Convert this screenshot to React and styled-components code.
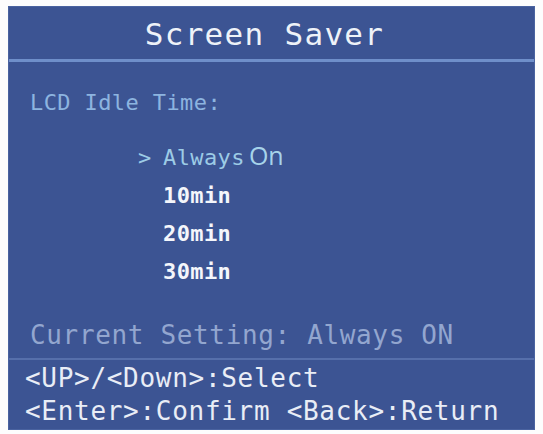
import styled, { createGlobalStyle } from "styled-components";

const GlobalStyle = createGlobalStyle`
  html, body {
    margin: 0;
    padding: 0;
    background: #fdfdfd;
  }
  body {
    font-family: "DejaVu Sans Mono", "Liberation Mono", monospace;
  }
`;

const options = ["Always On", "10min", "20min", "30min"];

const App = () => {
  return (
    <>
      <GlobalStyle />
      <Screen>
        <Header>
          <Title>Screen Saver</Title>
        </Header>
        <Body>
          <Label>LCD Idle Time:</Label>
          <OptionList>
            {options.map((opt, i) => (
              <Option key={opt} selected={i === 0}>
                <Marker>{i === 0 ? ">" : ""}</Marker>
                {i === 0 ? (
                  <>
                    Always<Gap />
                    <OnWord>On</OnWord>
                  </>
                ) : (
                  opt
                )}
              </Option>
            ))}
          </OptionList>
          <Current>Current Setting: Always ON</Current>
        </Body>
        <Footer>
          <Hint>&lt;UP&gt;/&lt;Down&gt;:Select</Hint>
          <Hint>&lt;Enter&gt;:Confirm &lt;Back&gt;:Return</Hint>
        </Footer>
      </Screen>
    </>
  );
};

export default App;

const Screen = styled.div`
  margin: 6px 8px 0;
  width: 527px;
  height: 424px;
  box-sizing: border-box;
  background-color: #3c5493;
  border: 1px solid #4a63a0;
  display: flex;
  flex-direction: column;
  overflow: hidden;
`;

const Header = styled.div`
  height: 52px;
  display: flex;
  align-items: center;
  justify-content: center;
  padding-right: 14px;
  border-bottom: 3px solid #6f8fca;
`;

const Title = styled.div`
  font-size: 31px;
  letter-spacing: 1.3px;
  color: #eef2f8;
  padding-top: 2px;
`;

const Body = styled.div`
  flex: 1;
  display: flex;
  flex-direction: column;
  padding: 22px 0 0 21px;
  border-bottom: 2px solid #566fab;
`;

const Label = styled.div`
  font-size: 22px;
  letter-spacing: 0.4px;
  line-height: 38px;
  color: #8db4e0;
`;

const OptionList = styled.div`
  display: flex;
  flex-direction: column;
  margin: 14px 0 0 108px;
`;

const Option = styled.div`
  display: flex;
  align-items: baseline;
  font-size: 22px;
  letter-spacing: 0.4px;
  line-height: 38px;
  font-weight: ${({ selected }) => (selected ? 400 : 700)};
  color: ${({ selected }) => (selected ? "#9ccbe6" : "#f4f6fb")};
`;

const Marker = styled.span`
  width: 25px;
  flex-shrink: 0;
`;

const Gap = styled.span`
  width: 4px;
`;

const OnWord = styled.span`
  font-family: "Open Sans", "Noto Sans", sans-serif;
  font-size: 25px;
  letter-spacing: 0;
  color: #a6d3ea;
`;

const Current = styled.div`
  margin-top: 25px;
  font-size: 26px;
  letter-spacing: 0.65px;
  line-height: 38px;
  color: #93a6cf;
`;

const Footer = styled.div`
  height: 67px;
  padding: 2px 0 0 16px;
  display: flex;
  flex-direction: column;
`;

const Hint = styled.div`
  font-size: 26px;
  letter-spacing: 0.7px;
  line-height: 33px;
  color: #e9edf6;
`;
